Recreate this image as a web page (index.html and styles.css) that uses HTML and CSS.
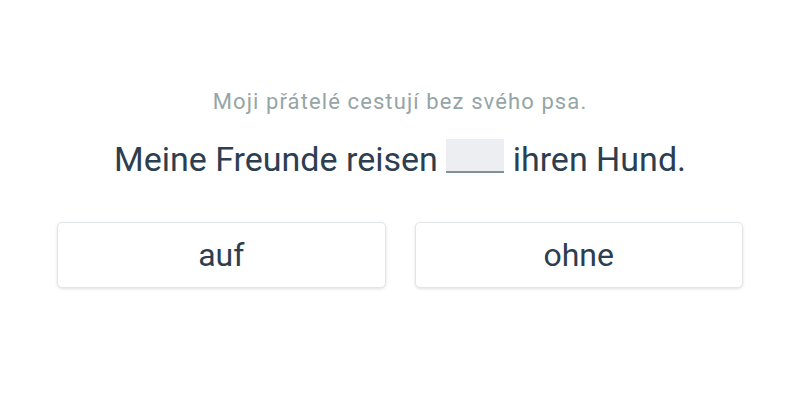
FILE: index.html
```html
<!DOCTYPE html>
<html>
<head>
<meta charset="utf-8">
<link rel="stylesheet" href="styles.css">
</head>
<body>
<div class="quiz">
  <p class="hint">Moji přátelé cestují bez svého psa.</p>
  <p class="sentence">Meine Freunde reisen <span class="blank"></span> ihren Hund.</p>
  <div class="options">
    <button class="option">auf</button>
    <button class="option">ohne</button>
  </div>
</div>
</body>
</html>
```
FILE: styles.css
```css
html, body {
  margin: 0;
  padding: 0;
  background: #ffffff;
}
body {
  font-family: Roboto, "Noto Sans", sans-serif;
  width: 800px;
  height: 400px;
}
.quiz {
  display: flex;
  flex-direction: column;
  align-items: center;
  padding-top: 88px;
}
.hint {
  margin: 0;
  font-size: 22px;
  line-height: 28px;
  letter-spacing: 1.1px;
  color: #95a5a6;
}
.sentence {
  margin: 23px 0 0 0;
  font-size: 34px;
  line-height: 40px;
  color: #2c3e50;
}
.blank {
  display: inline-block;
  width: 58px;
  height: 32px;
  vertical-align: -2px;
  background: #eceef1;
  border-bottom: 2px solid #7f9396;
}
.options {
  display: flex;
  gap: 29px;
  width: 686px;
  margin-top: 43px;
}
.option {
  flex: 1;
  height: 66px;
  background: #ffffff;
  border: 1px solid #e3e6e8;
  border-radius: 5px;
  box-shadow: 0 1px 3px rgba(0,0,0,0.12);
  font-family: Roboto, "Noto Sans", sans-serif;
  font-size: 32px;
  color: #2c3e50;
  padding: 0;
}
```
